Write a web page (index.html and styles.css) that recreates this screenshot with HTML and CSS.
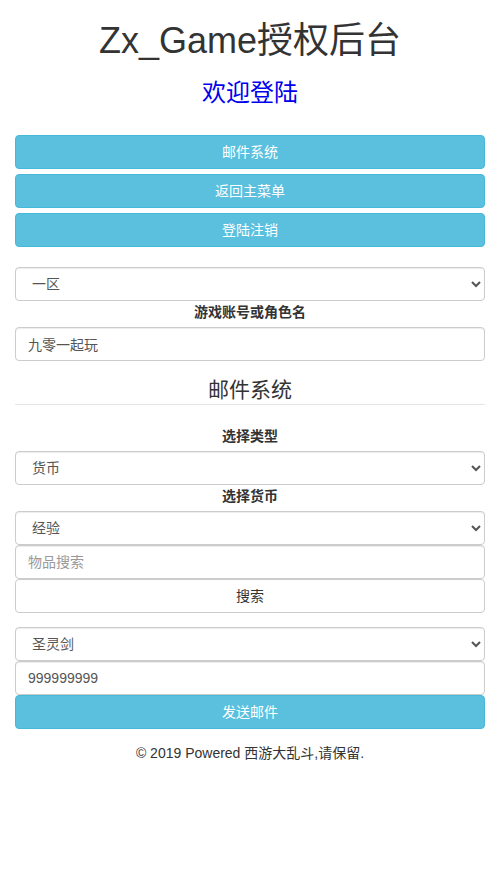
FILE: index.html
```html
<!DOCTYPE html>
<html lang="zh-CN">
<head>
<meta charset="utf-8">
<title>Zx_Game授权后台</title>
<link rel="stylesheet" href="styles.css">
</head>
<body>
<div class="container">
  <h1 class="title">Zx_Game授权后台</h1>
  <h3 class="welcome">欢迎登陆</h3>
  <div class="menu">
    <button class="btn btn-info" type="button">邮件系统</button>
    <button class="btn btn-info" type="button">返回主菜单</button>
    <button class="btn btn-info" type="button">登陆注销</button>
  </div>
  <form class="mail-form">
    <select class="form-control server">
      <option>一区</option>
    </select>
    <label class="field-label">游戏账号或角色名</label>
    <input class="form-control" type="text" value="九零一起玩">
    <div class="legend">邮件系统</div>
    <label class="field-label first">选择类型</label>
    <select class="form-control">
      <option>货币</option>
    </select>
    <label class="field-label">选择货币</label>
    <select class="form-control">
      <option>经验</option>
    </select>
    <input class="form-control" type="text" placeholder="物品搜索">
    <button class="btn btn-default" type="button">搜索</button>
    <select class="form-control item">
      <option>圣灵剑</option>
    </select>
    <input class="form-control" type="text" value="999999999">
    <button class="btn btn-info" type="button">发送邮件</button>
  </form>
  <p class="footer">© 2019 Powered 西游大乱斗,请保留.</p>
</div>
</body>
</html>
```

FILE: styles.css
```css
html, body {
  margin: 0;
  padding: 0;
  background: #fff;
}
body {
  font-family: "Liberation Sans", "Noto Sans CJK SC", sans-serif;
  font-size: 14px;
  line-height: 20px;
  color: #333;
}
.container {
  padding: 0 15px;
}
.title {
  margin: 21px 0 0;
  font-size: 36px;
  line-height: 40px;
  font-weight: normal;
  text-align: center;
  color: #333;
}
.welcome {
  margin: 18px 0 0;
  font-size: 24px;
  line-height: 28px;
  font-weight: normal;
  text-align: center;
  color: #0000ee;
}
.menu {
  margin-top: 28px;
  display: flex;
  flex-direction: column;
  gap: 5px;
}
.btn {
  display: block;
  box-sizing: border-box;
  width: 100%;
  height: 34px;
  margin: 0;
  padding: 6px 12px;
  font-family: inherit;
  font-size: 14px;
  line-height: 20px;
  border: 1px solid transparent;
  border-radius: 4px;
  text-align: center;
  cursor: pointer;
}
.btn-info {
  background: #5bc0de;
  border-color: #46b8da;
  color: #fff;
}
.btn-default {
  background: #fff;
  border-color: #ccc;
  color: #333;
}
.mail-form {
  margin: 20px 0 0;
  display: flex;
  flex-direction: column;
}
.form-control {
  display: block;
  box-sizing: border-box;
  width: 100%;
  height: 34px;
  margin: 0;
  padding: 6px 12px;
  font-family: inherit;
  font-size: 14px;
  line-height: 20px;
  color: #555;
  background: #fff;
  border: 1px solid #ccc;
  border-radius: 4px;
  box-shadow: inset 0 1px 1px rgba(0, 0, 0, 0.075);
}
.form-control::placeholder {
  color: #999;
}
.field-label {
  display: block;
  margin: 1px 0 5px;
  line-height: 20px;
  font-weight: bold;
  text-align: center;
  color: #333;
}
.legend {
  margin: 15px 0 21px;
  font-size: 21px;
  line-height: 28px;
  text-align: center;
  color: #333;
  border-bottom: 1px solid #e5e5e5;
}
.field-label.first {
  margin-top: 0;
}
.item {
  margin-top: 14px;
}
.footer {
  margin: 14px 0 0;
  line-height: 20px;
  text-align: center;
  color: #333;
}
```
